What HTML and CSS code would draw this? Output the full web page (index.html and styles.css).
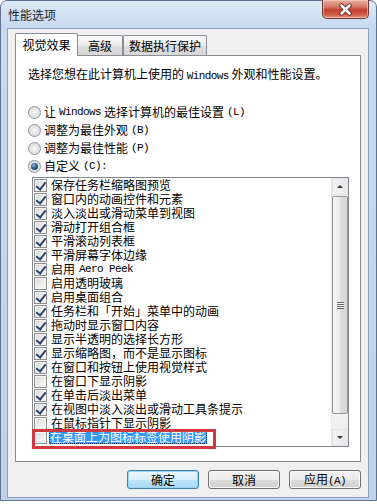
FILE: index.html
```html
<!DOCTYPE html>
<html lang="zh-CN">
<head>
  <meta charset="UTF-8" />
  <meta name="viewport" content="width=device-width, initial-scale=1.0">
  <title>性能选项</title>
  <link rel="stylesheet" href="styles.css">
</head>
<body>
  <div class="window">
    <div class="titlebar">
      <span class="title">性能选项</span>
      <div class="close">
        <svg width="15" height="13" viewBox="0 0 15 13">
          <path d="M3.5 2.5 L11.5 10.5 M11.5 2.5 L3.5 10.5" stroke="#5a1f1a" stroke-width="4.4" stroke-linecap="round" />
          <path d="M3.5 2.5 L11.5 10.5 M11.5 2.5 L3.5 10.5" stroke="#fff" stroke-width="2.6" stroke-linecap="round" />
        </svg>
      </div>
    </div>

    <div class="client">
      <div class="tabs">
        <div class="tab active">视觉效果</div>
        <div class="tab tab-adv">高级</div>
        <div class="tab tab-dep">数据执行保护</div>
      </div>

      <div class="panel">
        <p class="desc">选择您想在此计算机上使用的 <span class="en">Windows</span> 外观和性能设置。</p>

        <div class="radios">
          <div class="radio"><span class="dot"></span>让 <span class="en">Windows</span> 选择计算机的最佳设置<span class="en">(L)</span></div>
          <div class="radio"><span class="dot"></span>调整为最佳外观<span class="en">(B)</span></div>
          <div class="radio"><span class="dot"></span>调整为最佳性能<span class="en">(P)</span></div>
          <div class="radio"><span class="dot checked"></span>自定义<span class="en">(C):</span></div>
        </div>

        <div class="listbox">
          <ul class="items">
            <li class="item"><span class="box on"></span>保存任务栏缩略图预览</li>
            <li class="item"><span class="box on"></span>窗口内的动画控件和元素</li>
            <li class="item"><span class="box on"></span>淡入淡出或滑动菜单到视图</li>
            <li class="item"><span class="box on"></span>滑动打开组合框</li>
            <li class="item"><span class="box on"></span>平滑滚动列表框</li>
            <li class="item"><span class="box on"></span>平滑屏幕字体边缘</li>
            <li class="item"><span class="box on"></span>启用 <span class="en">Aero Peek</span></li>
            <li class="item"><span class="box"></span>启用透明玻璃</li>
            <li class="item"><span class="box on"></span>启用桌面组合</li>
            <li class="item"><span class="box on"></span>任务栏和「开始」菜单中的动画</li>
            <li class="item"><span class="box on"></span>拖动时显示窗口内容</li>
            <li class="item"><span class="box on"></span>显示半透明的选择长方形</li>
            <li class="item"><span class="box on"></span>显示缩略图，而不是显示图标</li>
            <li class="item"><span class="box on"></span>在窗口和按钮上使用视觉样式</li>
            <li class="item"><span class="box"></span>在窗口下显示阴影</li>
            <li class="item"><span class="box on"></span>在单击后淡出菜单</li>
            <li class="item"><span class="box on"></span>在视图中淡入淡出或滑动工具条提示</li>
            <li class="item"><span class="box"></span>在鼠标指针下显示阴影</li>
            <li class="item"><span class="box"></span><span class="selected">在桌面上为图标标签使用阴影</span></li>
          </ul>

          <div class="scrollbar">
            <div class="sb-btn"><span class="arrow up"></span></div>
            <div class="sb-thumb"><span class="grip"></span></div>
            <div class="sb-track"></div>
            <div class="sb-btn"><span class="arrow down"></span></div>
          </div>

          <div class="mark"></div>
        </div>
      </div>

      <div class="buttons">
        <button class="btn default">确定</button>
        <button class="btn">取消</button>
        <button class="btn">应用<span class="en">(A)</span></button>
      </div>
    </div>
  </div>
</body>
</html>
```

FILE: styles.css
```css
* {
  margin: 0;
  padding: 0;
  box-sizing: border-box;
}

body {
  font-family: "Noto Sans CJK SC", "Liberation Sans", sans-serif;
  font-size: 12px;
  line-height: 14px;
  color: #000;
  background: #fff;
  overflow: hidden;
}

/* half-width latin, 6px per char like the old system font */
.en {
  font-family: "Liberation Mono", monospace;
  font-size: 11px;
  letter-spacing: -0.6px;
}

.window {
  width: 377px;
  height: 501px;
  border: 1px solid #5f7391;
  border-radius: 7px 7px 0 0;
  background: linear-gradient(180deg, #dce8f6 0%, #c6d9ef 28px, #bfd3eb 100%);
  padding: 0 7px 2px 6px;
  display: flex;
  flex-direction: column;
}

.titlebar {
  height: 28px;
  display: flex;
  justify-content: space-between;
  align-items: flex-start;
}

.title {
  margin-top: 7px;
  margin-left: 1px;
  font-size: 12px;
  color: #1e1e1e;
}

.close {
  width: 47px;
  height: 19px;
  margin-top: -1px;
  border: 1px solid #6e3a36;
  border-top: none;
  border-radius: 0 0 5px 5px;
  background: linear-gradient(180deg, #e8ae9f 0%, #d47665 40%, #c2402f 55%, #cf5a45 80%, #e69a84 100%);
  box-shadow: inset 0 0 0 1px rgba(255, 220, 210, 0.5);
  display: flex;
  align-items: center;
  justify-content: center;
}

.client {
  flex: 1;
  background: #f0f0f0;
  border: 1px solid #8fa2ba;
  padding: 4px 7px 8px 7px;
  display: flex;
  flex-direction: column;
}

/* tabs */
.tabs {
  display: flex;
  align-items: flex-end;
  height: 22px;
  position: relative;
  z-index: 1;
}

.tab {
  height: 20px;
  border: 1px solid #898c95;
  border-bottom: none;
  border-radius: 2px 2px 0 0;
  background: linear-gradient(180deg, #f9f9f9 0%, #ebebeb 50%, #dddddd 51%, #d7d7d7 100%);
  text-align: center;
  line-height: 19px;
  margin-left: -1px;
}

.tab.active {
  height: 23px;
  margin-bottom: -1px;
  margin-left: 0;
  width: 63px;
  background: #fff;
  line-height: 22px;
  position: relative;
  z-index: 2;
}

.tab-adv {
  width: 46px;
}

.tab-dep {
  width: 84px;
  margin-left: 0;
}

/* panel */
.panel {
  height: 407px;
  background: #fff;
  border: 1px solid #898c95;
  padding: 11px 12px 0 12px;
}

.desc {
  height: 14px;
}

.radios {
  margin-top: 22px;
}

.radio {
  height: 18px;
  display: flex;
  align-items: center;
  gap: 3px;
}

.dot {
  width: 13px;
  height: 13px;
  border-radius: 50%;
  border: 1px solid #8a939c;
  background: radial-gradient(circle at 50% 50%, #f6f6f6 0%, #e2e2e2 60%, #cfcfcf 100%);
  display: flex;
  align-items: center;
  justify-content: center;
}

.dot.checked::after {
  content: '';
  width: 7px;
  height: 7px;
  border-radius: 50%;
  background: radial-gradient(circle at 40% 35%, #8fb8dc 0%, #2b5c8c 45%, #0c2f52 100%);
}

/* list */
.listbox {
  margin-top: 2px;
  margin-left: 4px;
  width: 317px;
  height: 270px;
  border: 1px solid #828790;
  background: #fff;
  display: flex;
  position: relative;
}

.items {
  list-style: none;
  flex: 1;
}

.item {
  height: 14px;
  display: flex;
  align-items: center;
  gap: 4px;
  padding-left: 1px;
  white-space: nowrap;
}

.box {
  width: 13px;
  height: 13px;
  flex: none;
  border: 1px solid #8e8f8f;
  background: linear-gradient(135deg, #d6d6d6 0%, #ececec 50%, #fafafa 100%);
  box-shadow: inset 0 0 0 1px #f4f4f4;
  position: relative;
}

.box.on::after {
  content: '';
  position: absolute;
  left: 3px;
  top: 0px;
  width: 4px;
  height: 8px;
  border: solid #2f4470;
  border-width: 0 2px 2px 0;
  transform: rotate(38deg);
}

.selected {
  background: #3399ff;
  color: #fff;
  padding: 0 1px;
  margin-left: -2px;
  outline: 1px dotted #1a3f66;
  outline-offset: -1px;
}

.scrollbar {
  width: 17px;
  flex: none;
  background: #f0f0f0;
  border-left: 1px solid #e6e6e6;
  display: flex;
  flex-direction: column;
}

.sb-btn {
  height: 17px;
  border: 1px solid #e2e2e2;
  background: linear-gradient(90deg, #f4f4f4, #e9e9e9);
  display: flex;
  align-items: center;
  justify-content: center;
}

.arrow {
  width: 0;
  height: 0;
  border-left: 3px solid transparent;
  border-right: 3px solid transparent;
}

.arrow.up {
  border-bottom: 3px solid #3b3b3b;
}

.arrow.down {
  border-top: 3px solid #3b3b3b;
}

.sb-thumb {
  height: 218px;
  margin: 1px 0;
  border: 1px solid #979797;
  border-radius: 2px;
  background: linear-gradient(90deg, #f6f6f6 0%, #ececec 50%, #dedede 51%, #d6d6d6 100%);
  display: flex;
  align-items: center;
  justify-content: center;
}

.grip {
  width: 7px;
  height: 7px;
  background: repeating-linear-gradient(180deg, #6a6a6a 0, #6a6a6a 1px, #f0f0f0 1px, #f0f0f0 2px);
}

.sb-track {
  flex: 1;
}

.mark {
  position: absolute;
  left: -1px;
  top: 251px;
  width: 184px;
  height: 20px;
  border: 3px solid #d0383e;
}

/* buttons */
.buttons {
  margin-top: 8px;
  display: flex;
  justify-content: flex-end;
  gap: 9px;
}

.btn {
  width: 72px;
  height: 19px;
  font-family: inherit;
  font-size: 12px;
  line-height: 16px;
  color: #000;
  border: 1px solid #707070;
  border-radius: 3px;
  background: linear-gradient(180deg, #f2f2f2 0%, #ebebeb 50%, #dddddd 51%, #cfcfcf 100%);
  box-shadow: inset 0 0 0 1px #fbfbfb;
}

.btn.default {
  border-color: #3c7fb1;
  background: linear-gradient(180deg, #eaf6fd 0%, #d9f0fc 50%, #bee6fd 51%, #a7d9f5 100%);
  box-shadow: inset 0 0 0 1px #9ad6f4;
}
```
